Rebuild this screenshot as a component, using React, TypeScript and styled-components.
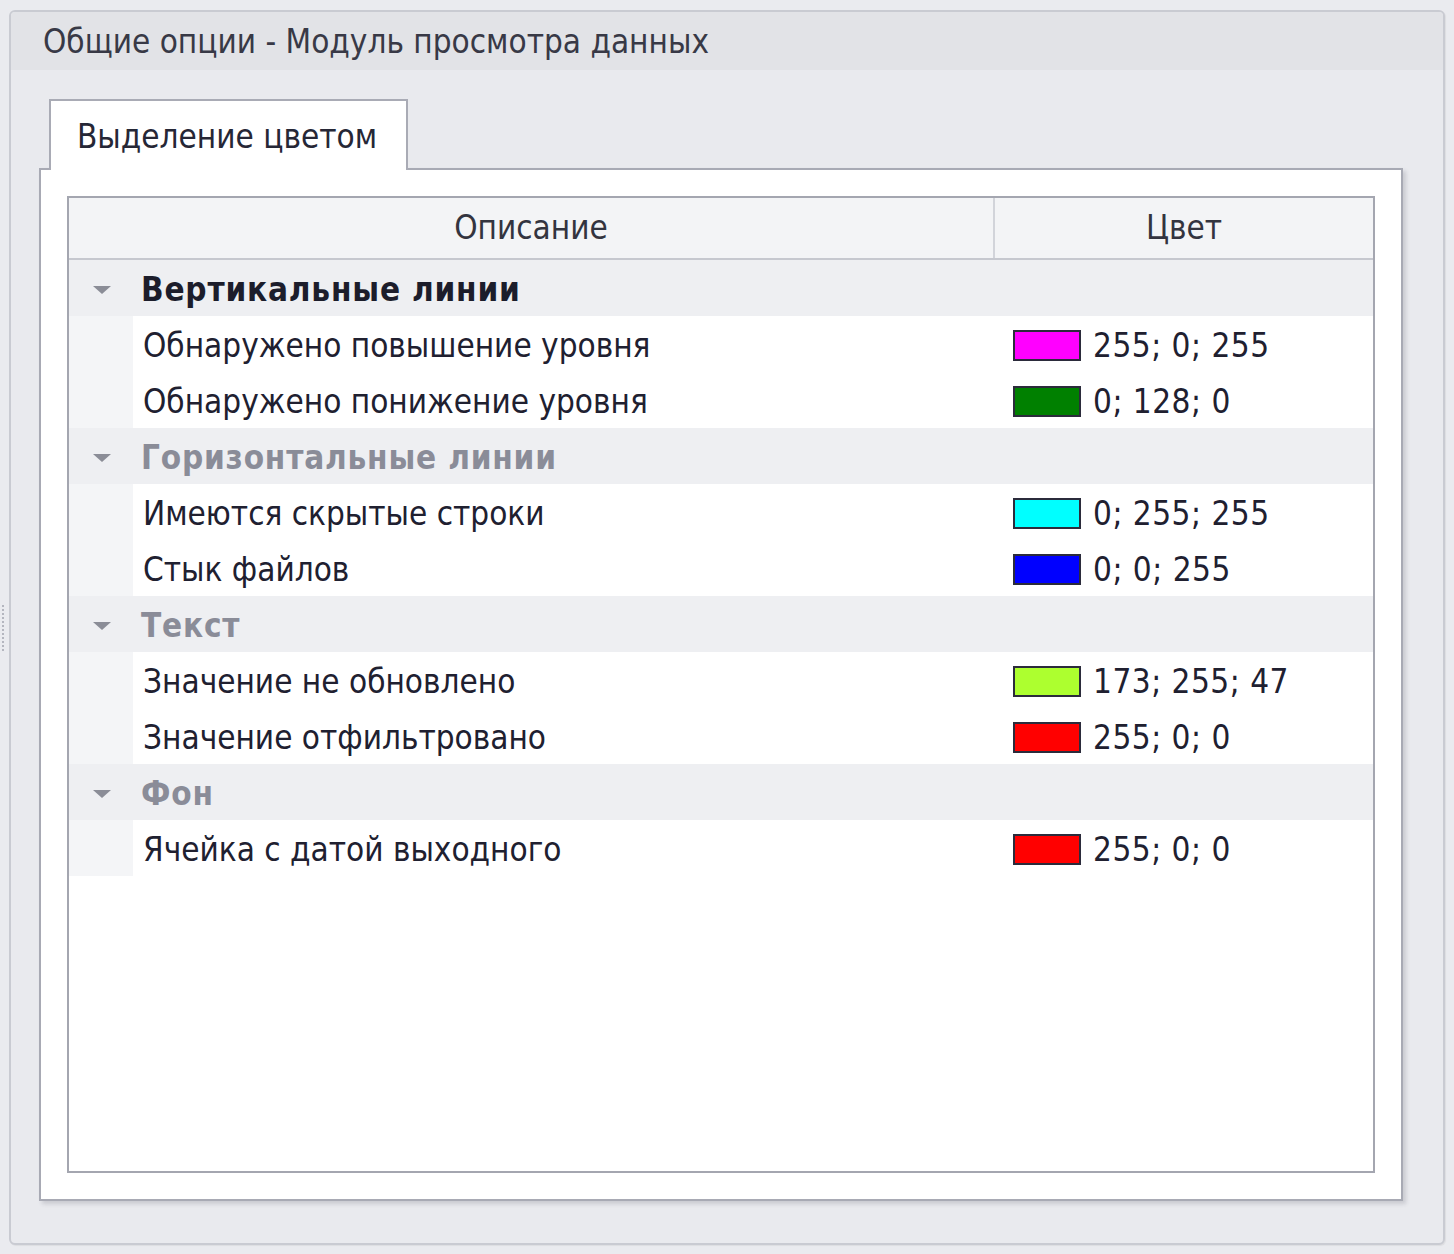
import React, { FC } from 'react';
import styled, { createGlobalStyle } from 'styled-components';

const GlobalStyle = createGlobalStyle`
  html, body {
    margin: 0;
    padding: 0;
    background: #eaebef;
  }
  body {
    font-family: "DejaVu Sans Condensed", "DejaVu Sans", sans-serif;
    font-stretch: condensed;
    color: #202030;
  }
`;

const StyledScreen = styled.div`
  display: flex;
  box-sizing: border-box;
  height: 1254px;
  padding: 10px 9px 9px 0;
`;

const StyledSplitter = styled.div`
  width: 9px;
  display: flex;
  align-items: center;
  justify-content: flex-start;
`;

const StyledGrip = styled.div`
  width: 2px;
  height: 46px;
  margin-left: 2px;
  border-left: 2px dotted #b4b6bf;
`;

const StyledGroupControl = styled.section`
  flex: 1;
  display: flex;
  flex-direction: column;
  border: 2px solid #c9cbd2;
  border-radius: 6px;
  background: #e9eaee;
  overflow: hidden;
  box-shadow: 1px 1px 1px rgba(0, 0, 0, 0.06);
`;

const StyledCaption = styled.h1`
  margin: 0;
  height: 58px;
  display: flex;
  align-items: center;
  padding-left: 32px;
  background: #e2e3e7;
  font-size: 33px;
  font-weight: normal;
  color: #383946;
`;

const StyledBody = styled.div`
  flex: 1;
  display: flex;
  flex-direction: column;
  padding: 29px 40px 42px 28px;
`;

const StyledTabStrip = styled.div`
  display: flex;
  padding-left: 10px;
  margin-bottom: -2px;
  position: relative;
  z-index: 1;
`;

const StyledTab = styled.div`
  box-sizing: border-box;
  width: 359px;
  height: 71px;
  display: flex;
  align-items: center;
  padding: 2px 0 0 26px;
  border: 2px solid #a9abb5;
  border-bottom: none;
  background: #ffffff;
  font-size: 33px;
  color: #262736;
`;

const StyledTabPage = styled.div`
  flex: 1;
  display: flex;
  flex-direction: column;
  padding: 26px;
  border: 2px solid #a8aab4;
  background: #ffffff;
  box-shadow: 3px 3px 4px rgba(60, 62, 80, 0.18);
`;

const StyledGrid = styled.div`
  flex: 1;
  display: flex;
  flex-direction: column;
  border: 2px solid #a4a6b0;
  background: #ffffff;
`;

const StyledHeader = styled.div`
  display: grid;
  grid-template-columns: 926px 1fr;
  height: 60px;
  border-bottom: 2px solid #c6c8cf;
  background: #f3f4f6;
`;

const StyledHeaderCell = styled.div<{ $divider?: boolean }>`
  display: flex;
  align-items: center;
  justify-content: center;
  padding-bottom: 2px;
  font-size: 33px;
  color: #33343f;
  border-right: ${p => (p.$divider ? '2px solid #d2d4da' : 'none')};
`;

const StyledGroupRow = styled.div<{ $active?: boolean }>`
  display: flex;
  align-items: center;
  box-sizing: border-box;
  height: 56px;
  padding-top: 3px;
  background: #eeeff2;
  font-size: 33px;
  font-weight: bold;
  letter-spacing: 0.8px;
  color: ${p => (p.$active ? '#1c1d2b' : '#8a8c98')};
`;

const StyledExpander = styled.div`
  width: 72px;
  display: flex;
  justify-content: center;
  padding-right: 6px;
  box-sizing: border-box;
`;

const StyledArrow = styled.div`
  width: 0;
  height: 0;
  border-left: 9px solid transparent;
  border-right: 9px solid transparent;
  border-top: 8px solid #8b8d97;
`;

const StyledRow = styled.div`
  display: grid;
  grid-template-columns: 64px 862px 1fr;
  height: 56px;
  font-size: 33px;
  color: #202030;
`;

const StyledIndent = styled.div`
  background: #f4f5f7;
`;

const StyledCell = styled.div`
  display: flex;
  align-items: center;
  padding: 3px 0 0 10px;
  white-space: nowrap;
`;

const StyledColorCell = styled.div`
  display: flex;
  align-items: center;
  gap: 12px;
  padding: 3px 0 0 18px;
  white-space: nowrap;
  letter-spacing: 0.5px;
`;

const StyledSwatch = styled.span<{ $color: string }>`
  box-sizing: border-box;
  width: 68px;
  height: 31px;
  border: 2px solid #2b2b3b;
  background: ${p => p.$color};
`;

type Item = { label: string; rgb: [number, number, number] };
type Group = { title: string; active?: boolean; items: Item[] };

const groups: Group[] = [
  {
    title: 'Вертикальные линии',
    active: true,
    items: [
      { label: 'Обнаружено повышение уровня', rgb: [255, 0, 255] },
      { label: 'Обнаружено понижение уровня', rgb: [0, 128, 0] },
    ],
  },
  {
    title: 'Горизонтальные линии',
    items: [
      { label: 'Имеются скрытые строки', rgb: [0, 255, 255] },
      { label: 'Стык файлов', rgb: [0, 0, 255] },
    ],
  },
  {
    title: 'Текст',
    items: [
      { label: 'Значение не обновлено', rgb: [173, 255, 47] },
      { label: 'Значение отфильтровано', rgb: [255, 0, 0] },
    ],
  },
  {
    title: 'Фон',
    items: [{ label: 'Ячейка с датой выходного', rgb: [255, 0, 0] }],
  },
];

const App: FC = () => {
  return (
    <>
      <GlobalStyle />
      <StyledScreen>
        <StyledSplitter>
          <StyledGrip />
        </StyledSplitter>
        <StyledGroupControl>
          <StyledCaption>Общие опции - Модуль просмотра данных</StyledCaption>
          <StyledBody>
            <StyledTabStrip>
              <StyledTab>Выделение цветом</StyledTab>
            </StyledTabStrip>
            <StyledTabPage>
              <StyledGrid>
                <StyledHeader>
                  <StyledHeaderCell $divider>Описание</StyledHeaderCell>
                  <StyledHeaderCell>Цвет</StyledHeaderCell>
                </StyledHeader>
                {groups.map(group => (
                  <React.Fragment key={group.title}>
                    <StyledGroupRow $active={group.active}>
                      <StyledExpander>
                        <StyledArrow />
                      </StyledExpander>
                      {group.title}
                    </StyledGroupRow>
                    {group.items.map(item => (
                      <StyledRow key={item.label}>
                        <StyledIndent />
                        <StyledCell>{item.label}</StyledCell>
                        <StyledColorCell>
                          <StyledSwatch $color={`rgb(${item.rgb.join(',')})`} />
                          {item.rgb.join('; ')}
                        </StyledColorCell>
                      </StyledRow>
                    ))}
                  </React.Fragment>
                ))}
              </StyledGrid>
            </StyledTabPage>
          </StyledBody>
        </StyledGroupControl>
      </StyledScreen>
    </>
  );
};

export default App;
